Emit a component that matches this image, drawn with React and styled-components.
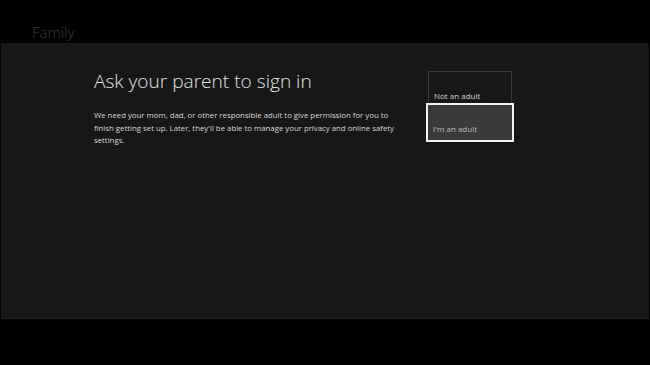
import styled, { createGlobalStyle } from "styled-components";

const GlobalStyle = createGlobalStyle`
  html, body {
    margin: 0;
    padding: 0;
    background: #000;
  }
  body {
    font-family: "Open Sans", "Noto Sans", sans-serif;
  }
`;

const Screen = styled.div`
  width: 650px;
  height: 365px;
  background: #000;
  display: flex;
  flex-direction: column;
`;

const Header = styled.div`
  height: 43px;
  padding-left: 32px;
  display: flex;
  align-items: flex-end;
  box-sizing: border-box;
`;

const HeaderTitle = styled.h1`
  margin: 0 0 1px;
  font-size: 15px;
  font-weight: 300;
  color: #3a3a3a;
  line-height: 20px;
`;

const Panel = styled.main`
  margin: 0 1px;
  height: 276px;
  background: #171717;
  border-bottom: 1px solid #222;
  display: flex;
  padding: 26px 0 0 93px;
  box-sizing: border-box;
`;

const Intro = styled.section`
  width: 310px;
`;

const Title = styled.h2`
  margin: 0;
  font-size: 19.1px;
  font-weight: 300;
  color: #e4e4e4;
  line-height: 24px;
`;

const Body = styled.p`
  margin: 16px 0 0;
  font-size: 7.8px;
  line-height: 12.5px;
  color: #d6d6d6;
  width: 310px;
`;

const Choices = styled.div`
  margin-left: 22px;
  margin-top: 2px;
  display: flex;
  flex-direction: column;
  width: 88px;
`;

const Choice = styled.div`
  box-sizing: border-box;
  display: flex;
  align-items: flex-end;
  font-size: 8px;
  ${({ $selected }) =>
    $selected
      ? `
    width: 88px;
    height: 39px;
    margin-top: -1px;
    border: 2px solid #f2f2f2;
    background: #3a3a3a;
    color: #bdbdbd;
    padding: 0 0 6px 5px;
  `
      : `
    width: 84px;
    height: 33px;
    margin: 0 2px;
    border: 1px solid #3a3a3a;
    border-bottom: none;
    color: #d0d0d0;
    padding: 0 0 3px 5px;
  `}
`;

export default function App() {
  return (
    <Screen>
      <GlobalStyle />
      <Header>
        <HeaderTitle>Family</HeaderTitle>
      </Header>
      <Panel>
        <Intro>
          <Title>Ask your parent to sign in</Title>
          <Body>
            We need your mom, dad, or other responsible adult to give permission for you to
            finish getting set up. Later, they'll be able to manage your privacy and online
            safety settings.
          </Body>
        </Intro>
        <Choices>
          <Choice>Not an adult</Choice>
          <Choice $selected>I'm an adult</Choice>
        </Choices>
      </Panel>
    </Screen>
  );
}
